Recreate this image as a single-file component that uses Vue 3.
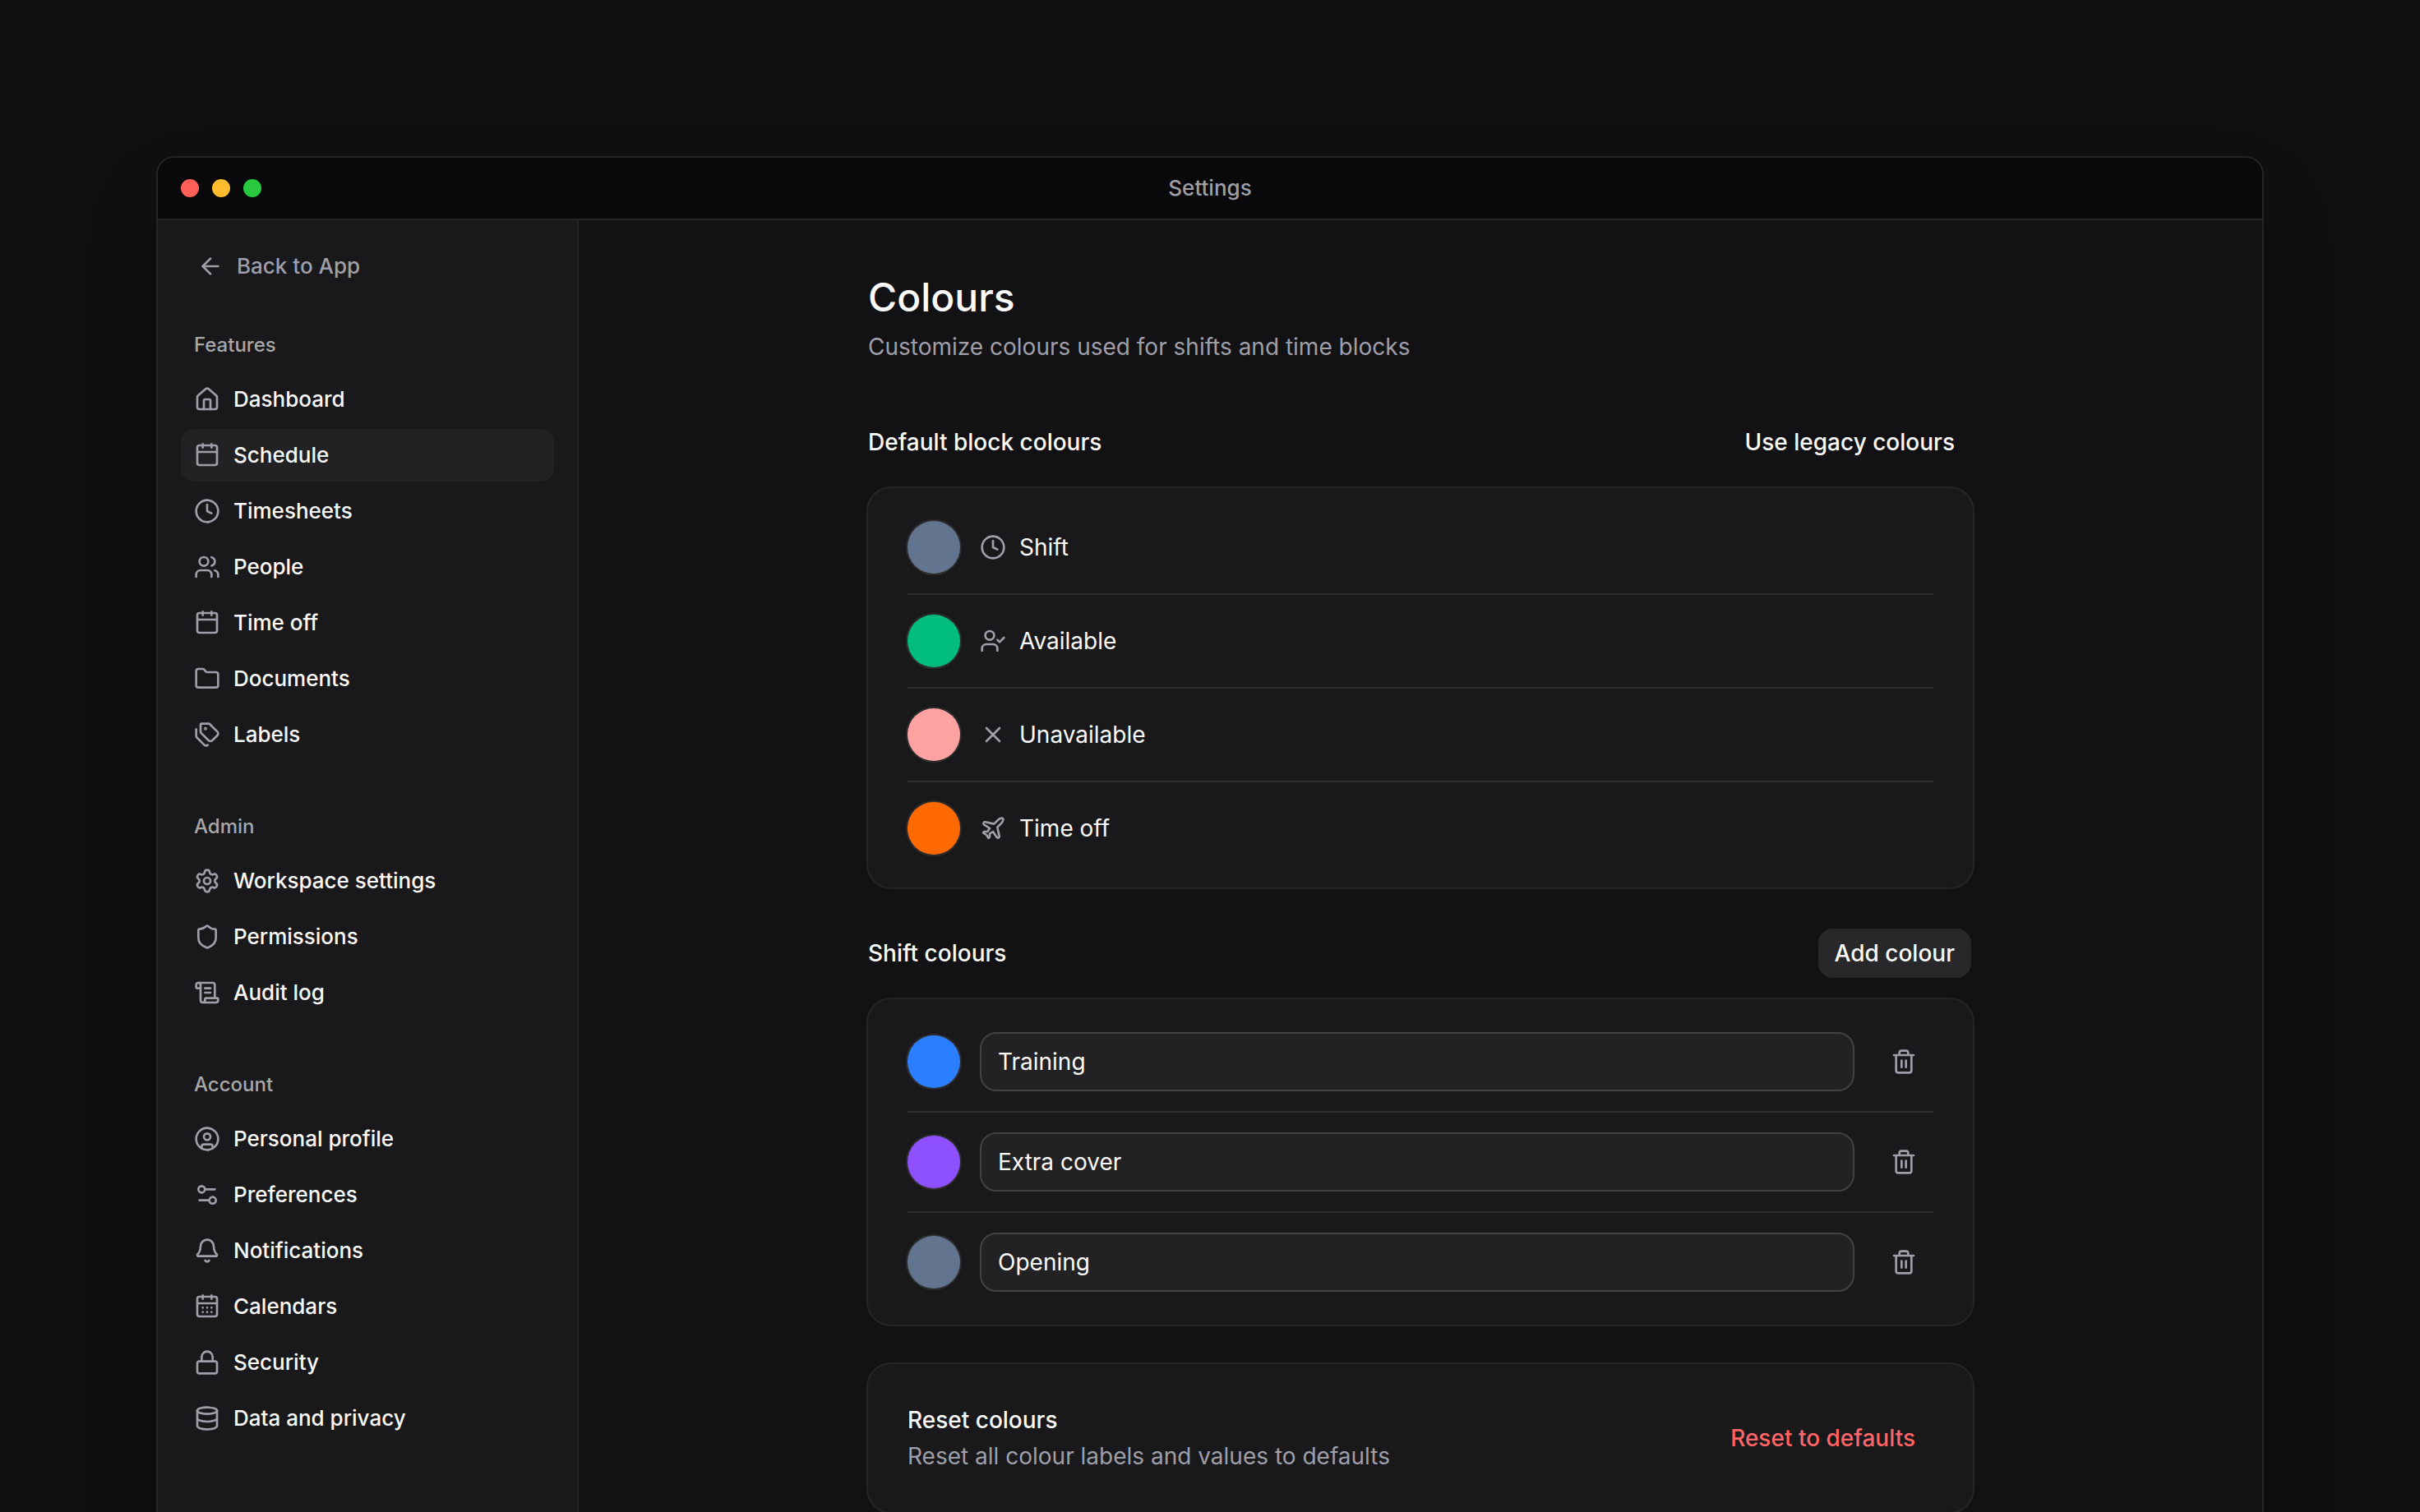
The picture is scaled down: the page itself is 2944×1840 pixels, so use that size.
<script setup>
import { ref } from 'vue'

const icons = {
  arrowLeft: '<path d="m12 19-7-7 7-7"/><path d="M19 12H5"/>',
  house:
    '<path d="M15 21v-8a1 1 0 0 0-1-1h-4a1 1 0 0 0-1 1v8"/><path d="M3 10a2 2 0 0 1 .709-1.528l7-5.999a2 2 0 0 1 2.582 0l7 5.999A2 2 0 0 1 21 10v9a2 2 0 0 1-2 2H5a2 2 0 0 1-2-2z"/>',
  calendar:
    '<rect x="3" y="3" width="18" height="18" rx="2"/><path d="M8 1.8V5M16 1.8V5M3 9h18"/>',
  calendarDays:
    '<rect x="3" y="3" width="18" height="18" rx="2"/><path d="M8 1.8V5M16 1.8V5M3 9h18"/><path d="M8 13h.01M12 13h.01M16 13h.01M8 17h.01M12 17h.01M16 17h.01"/>',
  clock: '<circle cx="12" cy="12" r="10"/><path d="M12 6v6l4 2"/>',
  users:
    '<path d="M16 21v-2a4 4 0 0 0-4-4H6a4 4 0 0 0-4 4v2"/><path d="M16 3.128a4 4 0 0 1 0 7.744"/><path d="M22 21v-2a4 4 0 0 0-3-3.87"/><circle cx="9" cy="7" r="4"/>',
  folder:
    '<path d="M20 20a2 2 0 0 0 2-2V8a2 2 0 0 0-2-2h-7.9a2 2 0 0 1-1.69-.9L9.6 3.9A2 2 0 0 0 7.93 3H4a2 2 0 0 0-2 2v13a2 2 0 0 0 2 2Z"/>',
  tags:
    '<path d="M13.172 2a2 2 0 0 1 1.414.586l6.71 6.71a2.4 2.4 0 0 1 0 3.408l-4.592 4.592a2.4 2.4 0 0 1-3.408 0l-6.71-6.71A2 2 0 0 1 6 9.172V3a1 1 0 0 1 1-1z"/><path d="M2 7v6.172a2 2 0 0 0 .586 1.414l6.71 6.71a2.4 2.4 0 0 0 3.191.193"/><circle cx="10.5" cy="6.5" r=".5" fill="currentColor"/>',
  settings:
    '<path d="M9.671 4.136a2.34 2.34 0 0 1 4.659 0 2.34 2.34 0 0 0 3.319 1.915 2.34 2.34 0 0 1 2.33 4.033 2.34 2.34 0 0 0 0 3.831 2.34 2.34 0 0 1-2.33 4.033 2.34 2.34 0 0 0-3.319 1.915 2.34 2.34 0 0 1-4.659 0 2.34 2.34 0 0 0-3.32-1.915 2.34 2.34 0 0 1-2.33-4.033 2.34 2.34 0 0 0 0-3.831A2.34 2.34 0 0 1 6.35 6.051a2.34 2.34 0 0 0 3.319-1.915"/><circle cx="12" cy="12" r="3"/>',
  shield:
    '<path d="M20 13c0 5-3.5 7.5-7.66 8.95a1 1 0 0 1-.67-.01C7.5 20.5 4 18 4 13V6a1 1 0 0 1 1-1c2 0 4.5-1.2 6.24-2.72a1.17 1.17 0 0 1 1.52 0C14.51 3.81 17 5 19 5a1 1 0 0 1 1 1z"/>',
  scroll:
    '<path d="M15 12h-5M15 8h-5"/><path d="M19 17V5a2 2 0 0 0-2-2H4"/><path d="M8 21h12a2 2 0 0 0 2-2v-1a1 1 0 0 0-1-1H11a1 1 0 0 0-1 1v1a2 2 0 1 1-4 0V5a2 2 0 1 0-4 0v2a1 1 0 0 0 1 1h3"/>',
  user:
    '<circle cx="12" cy="12" r="10"/><circle cx="12" cy="10" r="3"/><path d="M7 20.662V19a2 2 0 0 1 2-2h6a2 2 0 0 1 2 2v1.662"/>',
  sliders:
    '<path d="M14 17H5M19 7h-9"/><circle cx="17" cy="17" r="3"/><circle cx="7" cy="7" r="3"/>',
  bell:
    '<path d="M10.268 21a2 2 0 0 0 3.464 0"/><path d="M3.262 15.326A1 1 0 0 0 4 17h16a1 1 0 0 0 .74-1.673C19.41 13.956 18 12.499 18 8A6 6 0 0 0 6 8c0 4.499-1.411 5.956-2.738 7.326"/>',
  lock: '<rect x="3" y="11" width="18" height="11" rx="2"/><path d="M7 11V7a5 5 0 0 1 10 0v4"/>',
  database:
    '<ellipse cx="12" cy="5" rx="9" ry="3"/><path d="M3 5v14a9 3 0 0 0 18 0V5"/><path d="M3 12a9 3 0 0 0 18 0"/>',
  userCheck:
    '<path d="m16 11 2 2 4-4"/><path d="M16 21v-2a4 4 0 0 0-4-4H6a4 4 0 0 0-4 4v2"/><circle cx="9" cy="7" r="4"/>',
  cross: '<path d="M18 6 6 18M6 6l12 12"/>',
  plane:
    '<path d="M17.8 19.2 16 11l3.5-3.5C21 6 21.5 4 21 3c-1-.5-3 0-4.5 1.5L13 8 4.8 6.2c-.5-.1-.9.1-1.1.5l-.3.5c-.2.5-.1 1 .3 1.3L9 12l-2 3H4l-1 1 3 2 2 3 1-1v-3l3-2 3.5 5.3c.3.4.8.5 1.3.3l.5-.2c.4-.3.6-.7.5-1.2z"/>',
  trash:
    '<path d="M3 6h18M19 6v14a2 2 0 0 1-2 2H7a2 2 0 0 1-2-2V6M8 6V4a2 2 0 0 1 2-2h4a2 2 0 0 1 2 2v2M10 11v6M14 11v6"/>',
}

const groups = [
  {
    title: 'Features',
    items: [
      { label: 'Dashboard', icon: 'house' },
      { label: 'Schedule', icon: 'calendar', active: true },
      { label: 'Timesheets', icon: 'clock' },
      { label: 'People', icon: 'users' },
      { label: 'Time off', icon: 'calendar' },
      { label: 'Documents', icon: 'folder' },
      { label: 'Labels', icon: 'tags' },
    ],
  },
  {
    title: 'Admin',
    items: [
      { label: 'Workspace settings', icon: 'settings' },
      { label: 'Permissions', icon: 'shield' },
      { label: 'Audit log', icon: 'scroll' },
    ],
  },
  {
    title: 'Account',
    items: [
      { label: 'Personal profile', icon: 'user' },
      { label: 'Preferences', icon: 'sliders' },
      { label: 'Notifications', icon: 'bell' },
      { label: 'Calendars', icon: 'calendarDays' },
      { label: 'Security', icon: 'lock' },
      { label: 'Data and privacy', icon: 'database' },
    ],
  },
]

const blockColours = [
  { label: 'Shift', icon: 'clock', colour: '#62748e' },
  { label: 'Available', icon: 'userCheck', colour: '#00bc7d' },
  { label: 'Unavailable', icon: 'cross', colour: '#ffa2a2' },
  { label: 'Time off', icon: 'plane', colour: '#ff6900' },
]

const shiftColours = ref([
  { id: 1, label: 'Training', colour: '#2b7fff' },
  { id: 2, label: 'Extra cover', colour: '#8e51ff' },
  { id: 3, label: 'Opening', colour: '#62748e' },
])
</script>

<template>
  <div class="page">
    <div class="window">
      <header class="titlebar">
        <div class="lights">
          <span class="light close"></span>
          <span class="light minimise"></span>
          <span class="light zoom"></span>
        </div>
        <span class="window-title">Settings</span>
      </header>

      <div class="body">
        <aside class="sidebar">
          <a href="#" class="back">
            <svg class="icon" viewBox="0 0 24 24" aria-hidden="true" v-html="icons.arrowLeft"></svg>
            <span>Back to App</span>
          </a>
          <nav class="groups">
            <section v-for="group in groups" :key="group.title" class="group">
              <h2 class="group-title">{{ group.title }}</h2>
              <a
                v-for="item in group.items"
                :key="item.label"
                href="#"
                class="nav-item"
                :class="{ active: item.active }"
              >
                <svg class="icon" viewBox="0 0 24 24" aria-hidden="true" v-html="icons[item.icon]"></svg>
                <span>{{ item.label }}</span>
              </a>
            </section>
          </nav>
        </aside>

        <main class="main">
          <div class="content">
            <div class="intro">
              <h1>Colours</h1>
              <p>Customize colours used for shifts and time blocks</p>
            </div>

            <section class="section">
              <div class="section-head">
                <h2>Default block colours</h2>
                <button type="button" class="button">Use legacy colours</button>
              </div>
              <ul class="card">
                <li v-for="block in blockColours" :key="block.label" class="row">
                  <button
                    type="button"
                    class="swatch"
                    :style="{ backgroundColor: block.colour }"
                    :aria-label="block.label + ' colour'"
                  ></button>
                  <div class="block-label">
                    <svg class="icon" viewBox="0 0 24 24" aria-hidden="true" v-html="icons[block.icon]"></svg>
                    <span>{{ block.label }}</span>
                  </div>
                </li>
              </ul>
            </section>

            <section class="section">
              <div class="section-head">
                <h2>Shift colours</h2>
                <button type="button" class="button filled">Add colour</button>
              </div>
              <ul class="card">
                <li v-for="shift in shiftColours" :key="shift.id" class="row">
                  <button
                    type="button"
                    class="swatch"
                    :style="{ backgroundColor: shift.colour }"
                    :aria-label="shift.label + ' colour'"
                  ></button>
                  <input v-model="shift.label" class="field" type="text" aria-label="Colour label" />
                  <button type="button" class="delete" :aria-label="'Delete ' + shift.label">
                    <svg class="icon" viewBox="0 0 24 24" aria-hidden="true" v-html="icons.trash"></svg>
                  </button>
                </li>
              </ul>
            </section>

            <section class="card reset">
              <div class="reset-text">
                <h2>Reset colours</h2>
                <p>Reset all colour labels and values to defaults</p>
              </div>
              <button type="button" class="button danger">Reset to defaults</button>
            </section>
          </div>
        </main>
      </div>
    </div>
  </div>
</template>

<style>
body {
  margin: 0;
  background: #101012;
}
</style>

<style scoped>
.page {
  box-sizing: border-box;
  height: 100vh;
  padding: 192px 192px 0;
  overflow: hidden;
  background: #101012;
  color: #fafafa;
  font-family: Inter, "Liberation Sans", sans-serif;
  font-size: 28px;
  line-height: 44px;
}

h1,
h2,
p,
ul {
  margin: 0;
  padding: 0;
}

h2 {
  font-size: 28px;
  font-weight: 500;
}

button,
input {
  box-sizing: border-box;
  margin: 0;
  font: inherit;
  color: inherit;
}

a {
  color: inherit;
  text-decoration: none;
}

.icon {
  flex: none;
  width: 32px;
  height: 32px;
  fill: none;
  stroke: currentColor;
  stroke-width: 2;
  stroke-linecap: round;
  stroke-linejoin: round;
  color: #9f9fa9;
}

.window {
  border-radius: 20px;
  background: #121214;
  box-shadow: 0 0 0 2px #252527, 0 48px 96px -24px rgba(0, 0, 0, 0.4);
}

.titlebar {
  box-sizing: border-box;
  display: grid;
  grid-template-columns: 1fr auto 1fr;
  align-items: center;
  height: 76px;
  padding: 0 28px;
  border-bottom: 2px solid #252527;
  border-radius: 20px 20px 0 0;
  background: #09090b;
}

.lights {
  display: flex;
  gap: 16px;
}

.light {
  width: 22px;
  height: 22px;
  border-radius: 50%;
}

.close {
  background: #ff5f57;
}

.minimise {
  background: #febc2e;
}

.zoom {
  background: #28c840;
}

.window-title {
  color: #9f9fa9;
  font-size: 26px;
  font-weight: 500;
}

.body {
  display: flex;
}

.sidebar {
  box-sizing: border-box;
  flex: none;
  width: 512px;
  padding: 24px 28px;
  border-right: 2px solid #252527;
  background: #19191b;
  font-size: 26px;
  font-weight: 500;
}

.back {
  display: flex;
  align-items: center;
  gap: 16px;
  height: 64px;
  padding: 0 20px;
  color: #9f9fa9;
}

.groups {
  display: flex;
  flex-direction: column;
  gap: 50px;
  margin-top: 34px;
}

.group {
  display: flex;
  flex-direction: column;
  gap: 4px;
}

.group-title {
  padding: 0 16px;
  color: #a8a8a8;
  font-size: 24px;
  line-height: 60px;
}

.nav-item {
  display: flex;
  align-items: center;
  gap: 16px;
  height: 64px;
  padding: 0 16px;
  border-radius: 16px;
}

.active {
  background: #222224;
}

.main {
  flex: 1;
  min-width: 0;
  padding: 64px 48px;
}

.content {
  display: flex;
  flex-direction: column;
  gap: 48px;
  max-width: 1344px;
  margin: 0 auto;
}

.intro {
  display: flex;
  flex-direction: column;
  gap: 8px;
  padding-bottom: 14px;
}

.intro h1 {
  font-size: 48px;
  font-weight: 500;
  line-height: 60px;
}

.intro p,
.reset-text p {
  color: #9f9fa9;
}

.section {
  display: flex;
  flex-direction: column;
  gap: 24px;
}

.section-head {
  display: flex;
  align-items: center;
  justify-content: space-between;
}

.button {
  height: 64px;
  padding: 0 20px;
  border: 2px solid transparent;
  border-radius: 20px;
  background: transparent;
  background-clip: padding-box;
  font-weight: 500;
}

.filled {
  background-color: #28282a;
}

.danger {
  color: #ff6467;
}

.card {
  padding: 16px 48px;
  border-radius: 28px;
  background: #19191b;
  box-shadow: 0 0 0 2px #252527;
  list-style: none;
}

.row {
  display: flex;
  align-items: center;
  gap: 24px;
  padding: 24px 0;
}

.row + .row {
  border-top: 2px solid #2d2d2f;
}

.swatch {
  flex: none;
  width: 64px;
  height: 64px;
  padding: 0;
  border: 0;
  border-radius: 50%;
  box-shadow: 0 0 0 2px #2d2d2f;
}

.block-label {
  display: flex;
  align-items: center;
  gap: 16px;
}

.field {
  flex: 1;
  min-width: 0;
  height: 72px;
  padding: 0 20px;
  border: 2px solid #424244;
  border-radius: 20px;
  background: #222224;
}

.delete {
  display: flex;
  align-items: center;
  justify-content: center;
  width: 72px;
  height: 72px;
  padding: 0;
  border: 0;
  background: transparent;
}

.reset {
  display: flex;
  align-items: center;
  justify-content: space-between;
  padding: 46px 48px;
}
</style>
